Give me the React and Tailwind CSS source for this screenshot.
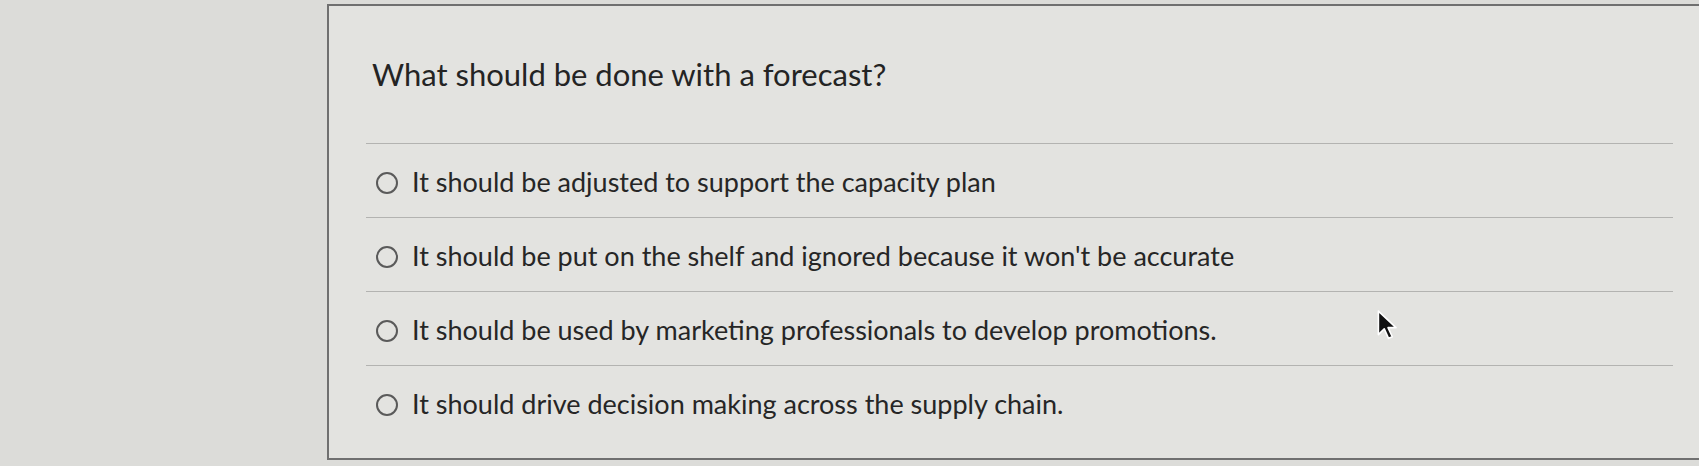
const options = [
  "It should be adjusted to support the capacity plan",
  "It should be put on the shelf and ignored because it won't be accurate",
  "It should be used by marketing professionals to develop promotions.",
  "It should drive decision making across the supply chain.",
];

function Cursor() {
  return (
    <svg width="24" height="32" viewBox="0 0 22 30" className="absolute left-[1376px] top-[309px]">
      <path
        d="M2 2 L2 24 L7.5 18.5 L11.5 27.5 L15 26 L11 17.5 L18.5 17.5 Z"
        fill="#111"
        stroke="#fff"
        strokeWidth="1.5"
        strokeLinejoin="round"
      />
    </svg>
  );
}

export default function App() {
  return (
    <div
      className="relative w-full h-[466px] bg-[#dcdcd9] flex overflow-hidden"
      style={{ fontFamily: "Lato, 'Open Sans', sans-serif" }}
    >
      <div className="w-[327px] shrink-0" />
      <div className="flex-1 mt-1 h-[456px] border-l-2 border-t-2 border-b-2 border-[#707070] bg-[#e3e3e0] pl-[43px] pr-[26px] pt-[49px]">
        <h1 className="text-[31px] leading-[38px] text-[#242424] font-normal">
          What should be done with a forecast?
        </h1>
        <div className="mt-[50px] -ml-[6px]">
          {options.map((opt, i) => (
            <div
              key={i}
              className="h-[74px] flex items-center gap-[14px] pl-[10px] pt-[4px] border-t border-[#b3b3b1]"
            >
              <span className="w-[22px] h-[22px] rounded-full border-2 border-[#5a5a5a] shrink-0" />
              <span className="text-[27px] text-[#262626]">{opt}</span>
            </div>
          ))}
        </div>
      </div>
      <Cursor />
    </div>
  );
}
